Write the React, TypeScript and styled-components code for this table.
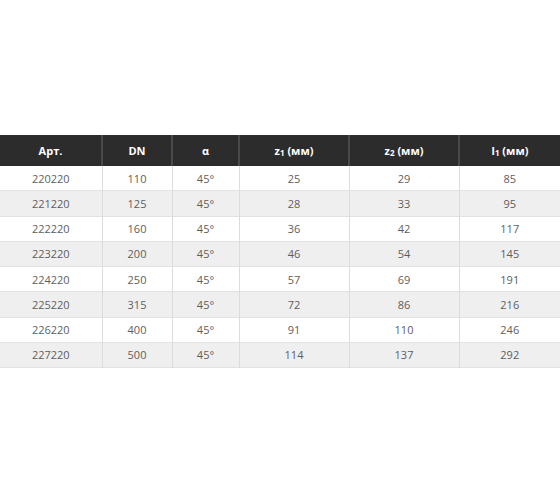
import React, { FC } from 'react';
import styled, { createGlobalStyle } from 'styled-components';

const GlobalStyle = createGlobalStyle`
  html, body {
    margin: 0;
    padding: 0;
    background: #ffffff;
  }
  body {
    font-family: 'Open Sans', 'Liberation Sans', sans-serif;
  }
`;

interface SizeRow {
  art: string;
  dn: number;
  angle: string;
  z1: number;
  z2: number;
  l1: number;
}

const rows: SizeRow[] = [
  { art: '220220', dn: 110, angle: '45°', z1: 25, z2: 29, l1: 85 },
  { art: '221220', dn: 125, angle: '45°', z1: 28, z2: 33, l1: 95 },
  { art: '222220', dn: 160, angle: '45°', z1: 36, z2: 42, l1: 117 },
  { art: '223220', dn: 200, angle: '45°', z1: 46, z2: 54, l1: 145 },
  { art: '224220', dn: 250, angle: '45°', z1: 57, z2: 69, l1: 191 },
  { art: '225220', dn: 315, angle: '45°', z1: 72, z2: 86, l1: 216 },
  { art: '226220', dn: 400, angle: '45°', z1: 91, z2: 110, l1: 246 },
  { art: '227220', dn: 500, angle: '45°', z1: 114, z2: 137, l1: 292 },
];

const colWidths = [102, 70, 67, 110, 110, 101];

export const App: FC = () => {
  return (
    <Page>
      <GlobalStyle />
      <Table>
        <colgroup>
          {colWidths.map((w, idx) => (
            <col key={idx} style={{ width: w }} />
          ))}
        </colgroup>
        <thead>
          <tr>
            <HeadCell>Арт.</HeadCell>
            <HeadCell>DN</HeadCell>
            <HeadCell>α</HeadCell>
            <HeadCell>
              z<sub>1</sub> (мм)
            </HeadCell>
            <HeadCell>
              z<sub>2</sub> (мм)
            </HeadCell>
            <HeadCell>
              l<sub>1</sub> (мм)
            </HeadCell>
          </tr>
        </thead>
        <tbody>
          {rows.map((r, idx) => (
            <BodyRow key={r.art} $striped={idx % 2 === 1}>
              <Cell>{r.art}</Cell>
              <Cell>{r.dn}</Cell>
              <Cell>{r.angle}</Cell>
              <Cell>{r.z1}</Cell>
              <Cell>{r.z2}</Cell>
              <Cell>{r.l1}</Cell>
            </BodyRow>
          ))}
        </tbody>
      </Table>
    </Page>
  );
};

const Page = styled.div`
  width: 560px;
  height: 504px;
  padding-top: 135px;
  box-sizing: border-box;
  background: #ffffff;
`;

const Table = styled.table`
  width: 560px;
  border-collapse: collapse;
  table-layout: fixed;
  font-size: 11px;
`;

const HeadCell = styled.th`
  height: 31px;
  padding: 0;
  background: #2c2c2c;
  color: #ffffff;
  font-weight: 700;
  text-align: center;
  vertical-align: middle;
  border-left: 2px solid #4a4a4a;
  &:first-child {
    border-left: none;
  }
  sub {
    font-size: 8px;
    vertical-align: -1px;
    line-height: 0;
  }
`;

const BodyRow = styled.tr<{ $striped: boolean }>`
  background: ${({ $striped }) => ($striped ? '#efefef' : '#ffffff')};
  border-bottom: 1px solid #e2e2e2;
`;

const Cell = styled.td`
  height: 24.25px;
  padding: 0;
  color: #5e5e5e;
  text-align: center;
  vertical-align: middle;
  border-left: 1px solid #dcdcdc;
  &:first-child {
    border-left: none;
  }
`;

export default App;
